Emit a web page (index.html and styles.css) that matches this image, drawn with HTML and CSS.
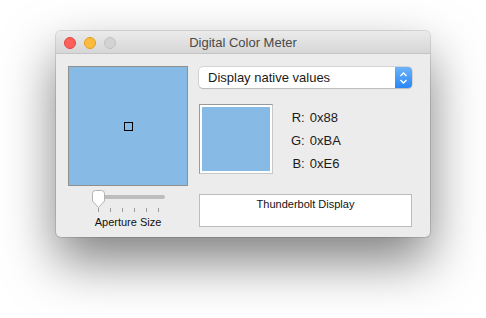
FILE: index.html
```html
<!DOCTYPE html>
<html lang="en">
<head>
  <meta charset="UTF-8">
  <title>Digital Color Meter</title>
  <link rel="stylesheet" href="styles.css">
</head>
<body>
  <div class="window">
    <div class="titlebar">
      <div class="lights">
        <span class="light red"></span>
        <span class="light yellow"></span>
        <span class="light gray"></span>
      </div>
      <div class="title">Digital Color Meter</div>
    </div>

    <div class="content">
      <!-- left: magnified view + aperture slider -->
      <div class="left-col">
        <div class="magnifier">
          <span class="aperture"></span>
        </div>
        <svg class="slider" width="80" height="25" viewBox="0 0 80 25">
          <rect x="4" y="7" width="73" height="4" rx="2" fill="#bdbdbd"/>
          <g stroke="#9a9a9a" stroke-width="1">
            <line x1="10.5" y1="20" x2="10.5" y2="24"/>
            <line x1="22.5" y1="20" x2="22.5" y2="24"/>
            <line x1="34.5" y1="20" x2="34.5" y2="24"/>
            <line x1="46.5" y1="20" x2="46.5" y2="24"/>
            <line x1="58.5" y1="20" x2="58.5" y2="24"/>
            <line x1="70.5" y1="20" x2="70.5" y2="24"/>
          </g>
          <path d="M4.5 5.5 Q4.5 2.5 7.5 2.5 L13.5 2.5 Q16.5 2.5 16.5 5.5 L16.5 13 L10.5 19.5 L4.5 13 Z"
                fill="#ffffff" stroke="#b3b3b3" stroke-width="1"/>
        </svg>
        <div class="slider-label">Aperture Size</div>
      </div>

      <!-- right: mode popup, sampled colour, values, display name -->
      <div class="right-col">
        <div class="popup">
          <span class="popup-text">Display native values</span>
          <span class="stepper">
            <svg width="9" height="14" viewBox="0 0 9 14">
              <path d="M1.5 5 L4.5 2 L7.5 5 M1.5 9 L4.5 12 L7.5 9" fill="none" stroke="#fff" stroke-width="1.4"/>
            </svg>
          </span>
        </div>

        <div class="sample-row">
          <div class="sample"></div>
          <div class="values">
            <span class="ch">R:</span><span class="val">0x88</span>
            <span class="ch">G:</span><span class="val">0xBA</span>
            <span class="ch">B:</span><span class="val">0xE6</span>
          </div>
        </div>

        <div class="display-box">Thunderbolt Display</div>
      </div>
    </div>
  </div>
</body>
</html>
```

FILE: styles.css
```css
html {
  height: 100%;
  background: #ffffff;
}

body {
  margin: 0;
  min-height: 100%;
  box-sizing: border-box;
  padding: 31px 0 0 56px;
  font-family: "Liberation Sans", Arial, sans-serif;
  color: #1a1a1a;
}

.window {
  width: 374px;
  height: 206px;
  background: #ececec;
  border-radius: 5px;
  overflow: hidden;
  box-shadow: 0 24px 52px rgba(0, 0, 0, 0.5), 0 0 0 1px rgba(0, 0, 0, 0.12);
}

.titlebar {
  height: 22px;
  position: relative;
  background: linear-gradient(to bottom, #ebebeb 0%, #d6d6d6 100%);
  border-bottom: 1px solid #c4c4c4;
  display: flex;
  align-items: center;
  justify-content: center;
}

.lights {
  position: absolute;
  left: 8px;
  top: 6px;
  display: flex;
  gap: 8px;
}

.light {
  width: 12px;
  height: 12px;
  border-radius: 50%;
  box-sizing: border-box;
}

.light.red {
  background: #fc605b;
  border: 1px solid #e2463f;
}

.light.yellow {
  background: #fdbc40;
  border: 1px solid #e1a116;
}

.light.gray {
  background: #d3d3d3;
  border: 1px solid #c1c1c1;
}

.title {
  font-size: 13px;
  color: #4a4a4a;
}

.content {
  display: flex;
  gap: 11px;
  padding: 12px 18px 0 12px;
}

.left-col {
  width: 120px;
  display: flex;
  flex-direction: column;
  align-items: center;
}

.magnifier {
  width: 120px;
  height: 120px;
  box-sizing: border-box;
  background: #88bae6;
  border: 1px solid #8f8f8f;
  display: flex;
  align-items: center;
  justify-content: center;
}

.aperture {
  width: 7px;
  height: 7px;
  border: 1px solid #000;
  margin-top: 1px;
}

.slider {
  display: block;
  margin-top: 2px;
  margin-left: -1px;
}

.slider-label {
  font-size: 11px;
  margin-top: 3px;
  color: #111;
}

.right-col {
  width: 213px;
  display: flex;
  flex-direction: column;
}

.popup {
  height: 21px;
  margin-top: 1px;
  box-sizing: border-box;
  background: #ffffff;
  border-radius: 4px;
  box-shadow: 0 0 0 0.5px rgba(0, 0, 0, 0.2), 0 1px 1px rgba(0, 0, 0, 0.12);
  display: flex;
  align-items: center;
  overflow: hidden;
}

.popup-text {
  flex: 1;
  font-size: 13px;
  padding-left: 9px;
  color: #1a1a1a;
}

.stepper {
  width: 17px;
  height: 21px;
  background: linear-gradient(to bottom, #6cb3fa 0%, #2a86f6 100%);
  display: flex;
  align-items: center;
  justify-content: center;
}

.sample-row {
  display: flex;
  margin-top: 16px;
}

.sample {
  width: 74px;
  height: 70px;
  box-sizing: border-box;
  background: #88bae6;
  border: 1px solid #9a9a9a;
  border-right-color: #c8c8c8;
  border-bottom-color: #c8c8c8;
  box-shadow: inset 0 0 0 2px #ffffff;
}

.values {
  display: grid;
  grid-template-columns: auto auto;
  column-gap: 5px;
  align-content: start;
  margin-left: 18px;
  margin-top: 2px;
  font-size: 13px;
  line-height: 23px;
}

.ch {
  text-align: right;
}

.display-box {
  height: 33px;
  margin-top: 19px;
  box-sizing: border-box;
  background: #ffffff;
  border: 1px solid #bcbcbc;
  font-size: 11px;
  text-align: center;
  padding-top: 3px;
  color: #111;
}
```
